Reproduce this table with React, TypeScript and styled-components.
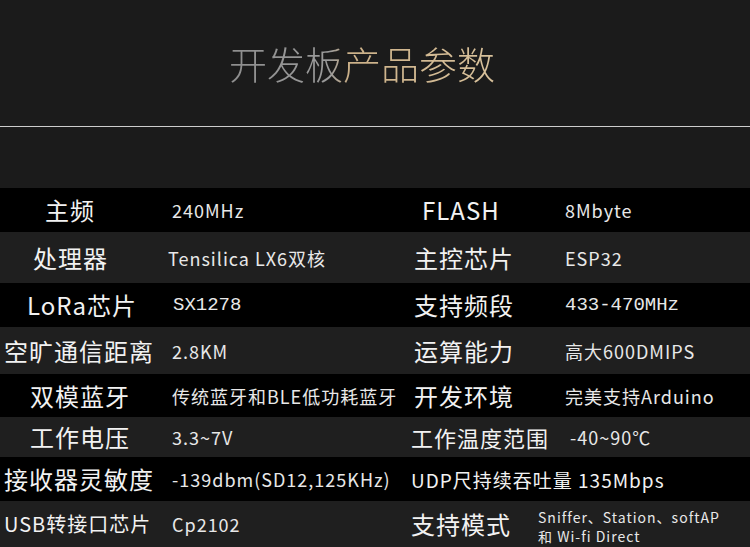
import styled, { createGlobalStyle } from "styled-components";

const GlobalStyle = createGlobalStyle`
  html, body {
    margin: 0;
    padding: 0;
    background: #1b1b1b;
  }
  body {
    font-family: "Noto Sans CJK SC", "Noto Sans", sans-serif;
  }
`;

type Cell = { text: string; indent: number; size?: number; mono?: boolean };
type Spec = {
  height: number;
  dark: boolean;
  left: Cell;
  leftValue: Cell;
  right: Cell;
  rightValue?: Cell;
  wide?: boolean;
};

const rows: Spec[] = [
  {
    height: 44,
    dark: true,
    left: { text: "主频", indent: 45 },
    leftValue: { text: "240MHz", indent: 7 },
    right: { text: "FLASH", indent: 17 },
    rightValue: { text: "8Mbyte", indent: 5 },
  },
  {
    height: 51,
    dark: false,
    left: { text: "处理器", indent: 33 },
    leftValue: { text: "Tensilica LX6双核", indent: 3 },
    right: { text: "主控芯片", indent: 9 },
    rightValue: { text: "ESP32", indent: 5 },
  },
  {
    height: 44,
    dark: true,
    left: { text: "LoRa芯片", indent: 27 },
    leftValue: { text: "SX1278", indent: 8, mono: true },
    right: { text: "支持频段", indent: 9 },
    rightValue: { text: "433-470MHz", indent: 5, mono: true },
  },
  {
    height: 47,
    dark: false,
    left: { text: "空旷通信距离", indent: 4 },
    leftValue: { text: "2.8KM", indent: 7 },
    right: { text: "运算能力", indent: 9 },
    rightValue: { text: "高大600DMIPS", indent: 5 },
  },
  {
    height: 43,
    dark: true,
    left: { text: "双模蓝牙", indent: 30 },
    leftValue: { text: "传统蓝牙和BLE低功耗蓝牙", indent: 7 },
    right: { text: "开发环境", indent: 9 },
    rightValue: { text: "完美支持Arduino", indent: 5 },
  },
  {
    height: 40,
    dark: false,
    left: { text: "工作电压", indent: 30 },
    leftValue: { text: "3.3~7V", indent: 7 },
    right: { text: "工作温度范围", indent: 6, size: 22 },
    rightValue: { text: "-40~90℃", indent: 10 },
  },
  {
    height: 44,
    dark: true,
    left: { text: "接收器灵敏度", indent: 4 },
    leftValue: { text: "-139dbm(SD12,125KHz)", indent: 7 },
    right: { text: "UDP尺持续吞吐量 135Mbps", indent: 6, size: 19 },
    wide: true,
  },
];

const Page = styled.div`
  width: 750px;
  height: 547px;
  overflow: hidden;
  background: #1b1b1b;
  display: flex;
  flex-direction: column;
`;

const Header = styled.div`
  height: 126px;
  display: flex;
  align-items: center;
  justify-content: center;
  box-sizing: border-box;
  padding-bottom: 2px;
  padding-right: 26px;
`;

const Title = styled.h1`
  margin: 0;
  font-size: 38px;
  font-weight: 300;
  letter-spacing: 0px;
  background: linear-gradient(
    90deg,
    #8e8e8e 0%,
    #9a9a9a 38%,
    #cbb088 45%,
    #d9c29c 100%
  );
  -webkit-background-clip: text;
  background-clip: text;
  color: transparent;
`;

const Rule = styled.div`
  height: 1px;
  background: #cdcdcd;
`;

const Spacer = styled.div`
  height: 61px;
`;

const Table = styled.div`
  display: flex;
  flex-direction: column;
`;

const Row = styled.div<{ $height: number; $dark: boolean }>`
  height: ${({ $height }) => $height}px;
  background: ${({ $dark }) => ($dark ? "#000000" : "#1f1f1f")};
  display: flex;
  align-items: center;
  color: #eeeeee;
`;

const Label = styled.div<{ $width: number; $indent: number; $size: number }>`
  width: ${({ $width }) => $width}px;
  flex: none;
  box-sizing: border-box;
  padding-left: ${({ $indent }) => $indent}px;
  font-size: ${({ $size }) => $size}px;
  letter-spacing: 1px;
  white-space: nowrap;
  line-height: 1;
  color: #f2f2f2;
`;

const Value = styled.div<{ $width?: number; $indent: number; $mono?: boolean }>`
  width: ${({ $width }) => ($width ? `${$width}px` : "auto")};
  flex: ${({ $width }) => ($width ? "none" : "1")};
  box-sizing: border-box;
  padding-left: ${({ $indent }) => $indent}px;
  font-family: ${({ $mono }) =>
    $mono
      ? `"Liberation Mono", monospace`
      : `"Noto Sans CJK SC", "Noto Sans", sans-serif`};
  font-size: ${({ $mono }) => ($mono ? "19px" : "18px")};
  letter-spacing: ${({ $mono }) => ($mono ? "0" : "1px")};
  white-space: nowrap;
  line-height: 1;
  color: #e8e8e8;
`;

const ModeText = styled.div`
  flex: 1;
  padding-top: 6px;
  font-size: 14px;
  letter-spacing: 1px;
  line-height: 19px;
  color: #e8e8e8;
  white-space: nowrap;
`;

export default function App() {
  return (
    <>
      <GlobalStyle />
      <Page>
        <Header>
          <Title>开发板产品参数</Title>
        </Header>
        <Rule />
        <Spacer />
        <Table>
          {rows.map((r) => (
            <Row key={r.left.text} $height={r.height} $dark={r.dark}>
              <Label $width={165} $indent={r.left.indent} $size={24}>
                {r.left.text}
              </Label>
              <Value $width={240} $indent={r.leftValue.indent} $mono={r.leftValue.mono}>
                {r.leftValue.text}
              </Value>
              <Label
                $width={r.wide ? 345 : 155}
                $indent={r.right.indent}
                $size={r.right.size ?? 24}
              >
                {r.right.text}
              </Label>
              {r.rightValue && (
                <Value $indent={r.rightValue.indent} $mono={r.rightValue.mono}>
                  {r.rightValue.text}
                </Value>
              )}
            </Row>
          ))}
          <Row $height={46} $dark={false}>
            <Label $width={165} $indent={4} $size={20}>
              USB转接口芯片
            </Label>
            <Value $width={240} $indent={7}>
              Cp2102
            </Value>
            <Label $width={133} $indent={6} $size={24}>
              支持模式
            </Label>
            <ModeText>
              Sniffer、Station、softAP
              <br />和 Wi-fi Direct
            </ModeText>
          </Row>
        </Table>
      </Page>
    </>
  );
}
